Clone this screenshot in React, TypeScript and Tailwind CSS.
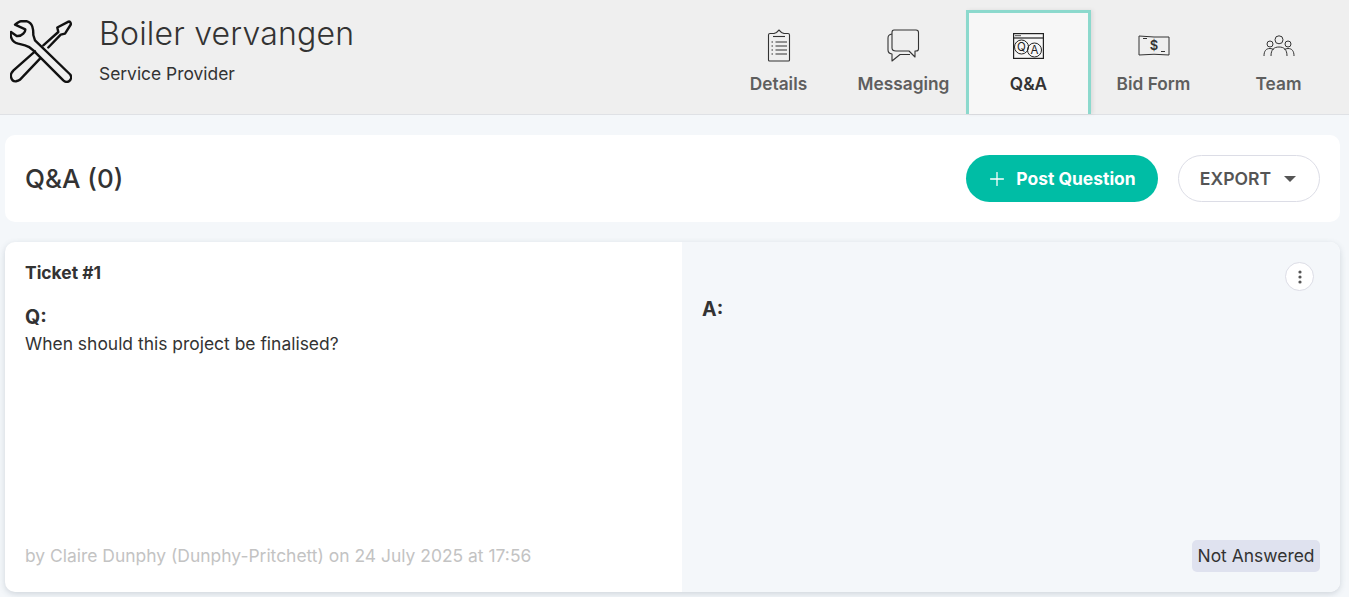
import { Plus } from "lucide-react";

function ToolsIcon() {
  return (
    <svg width="62" height="63" viewBox="0 0 62 63" fill="none" stroke="#111" strokeWidth="2.4" strokeLinejoin="round" strokeLinecap="round">
      {/* wrench */}
      <path d="M5 4.7 C7 3 9 1.2 11 1.2 H16.5 C19.5 2 21.5 4 22.3 6.5 C23.5 10 23.3 13 23.3 15 L25 20.3 L60.2 54.5 C61.5 56.5 61.3 59.5 59.3 61 C57.5 62.3 55 61.8 53.3 60.3 L23.3 30.3 C20.5 27.5 18 26 15 25.3 L8.3 23.7 C5 22.8 2.8 21 1.7 18.7 C0.6 16.5 0.4 14 1 12 L6.7 16 C9 16.3 11.5 15.5 13.3 13.7 C15 12 15.5 11 15.3 9.3 Z" />
      {/* screwdriver */}
      <path d="M33.3 25.3 L48.3 12 L47.3 7.5 L58.5 1.6 C60 1.4 61 2.5 60.8 4.5 L55 13.7 L50.7 14.7 L38.3 27.5" />
      <path d="M25 31.3 L3.5 50.3 C1.3 52.5 0.5 55 1 57 C1.7 60 4 61.5 6 61.3 C7.5 61 8.5 60.8 9.8 59.8 L30 38.7" />
    </svg>
  );
}

function DetailsIcon() {
  return (
    <svg width="24" height="34" viewBox="0 0 24 34" fill="none" stroke="#333" strokeWidth="1.1">
      <path d="M7 4.5 H3 Q1.5 4.5 1.5 6 V31 Q1.5 32 2.5 32 H21.5 Q22.5 32 22.5 31 V6 Q22.5 4.5 21 4.5 H17 L14.5 3.5 L12 1 L9.5 3.5 Z" />
      <path d="M6 7.5 H18" />
      <path d="M8.5 13 H20 M8.5 17 H20 M8.5 21 H20 M8.5 25 H20" />
      <path d="M4.5 13 H6 M4.5 17 H6 M4.5 21 H6 M4.5 25 H6" />
    </svg>
  );
}

function MessagingIcon() {
  return (
    <svg width="34" height="34" viewBox="0 0 34 34" fill="none" stroke="#333" strokeWidth="1.1" strokeLinejoin="round">
      <path d="M7 1 H29 Q31.5 1 31.5 3.5 V20 Q31.5 22 29 22 H28 V28 L22 22 H9 Q5 22 5 19 V3.5 Q5 1 7 1 Z" />
      <path d="M5 5 Q1 5.5 1 9 V21 Q1 24.5 5 25 V32 L13 25.5 H23" />
    </svg>
  );
}

function QaIcon() {
  return (
    <svg width="31" height="26" viewBox="0 0 31 26" fill="none" stroke="#222" strokeWidth="1.2">
      <rect x="0.6" y="0.6" width="29.8" height="24.8" />
      <path d="M0.6 5 H30.4" />
      <path d="M2 2.7 H8" strokeWidth="0.8" />
      <circle cx="8.5" cy="14" r="7" strokeWidth="1" />
      <circle cx="21.5" cy="17" r="7" strokeWidth="1" />
      <text x="8.5" y="18" fontSize="11.5" textAnchor="middle" fill="#222" stroke="none" fontFamily="Inter, sans-serif">Q</text>
      <text x="21.5" y="21" fontSize="11.5" textAnchor="middle" fill="#222" stroke="none" fontFamily="Inter, sans-serif">A</text>
    </svg>
  );
}

function BidIcon() {
  return (
    <svg width="32" height="22" viewBox="0 0 32 22" fill="none" stroke="#333" strokeWidth="1">
      <path d="M1 1 Q16 2.5 31 2 V20 Q16 18.5 1 20 Z" />
      <path d="M5 3.5 H9 M23 16.5 H27" />
      <text x="16" y="15" fontSize="13" fontWeight="600" textAnchor="middle" fill="#333" stroke="none" fontFamily="Inter, sans-serif">$</text>
    </svg>
  );
}

function TeamIcon() {
  return (
    <svg width="32" height="22" viewBox="0 0 32 22" fill="none" stroke="#333" strokeWidth="1">
      <circle cx="16" cy="4.8" r="4" />
      <circle cx="7" cy="9" r="3" />
      <circle cx="25" cy="9" r="3" />
      <path d="M8 21 C8 14.5 11 12 16 12 C21 12 24 14.5 24 21" />
      <path d="M1 21 C1 16 3 13.5 7 13.5 C8.5 13.5 9.5 14 10.5 14.5" />
      <path d="M31 21 C31 16 29 13.5 25 13.5 C23.5 13.5 22.5 14 21.5 14.5" />
    </svg>
  );
}

const tabs = [
  { label: "Details", icon: <DetailsIcon /> },
  { label: "Messaging", icon: <MessagingIcon /> },
  { label: "Q&A", icon: <QaIcon />, active: true },
  { label: "Bid Form", icon: <BidIcon /> },
  { label: "Team", icon: <TeamIcon /> },
];

export default function App() {
  return (
    <div className="h-[597px] overflow-hidden bg-[#f4f7fa] font-['Inter',sans-serif] text-[#333]">
      <header className="flex h-[115px] items-end justify-between border-b border-[#dfe1e5] bg-[#efefef] pr-[8px]">
        <div className="flex h-full items-start pl-[10px] pt-[20px]">
          <ToolsIcon />
          <div className="ml-[27px] -mt-[2px]">
            <h1 className="text-[32px] leading-[32px] font-light tracking-[0.2px]">Boiler vervangen</h1>
            <p className="mt-[14px] text-[17.4px] leading-[20px]">Service Provider</p>
          </div>
        </div>
        <nav className="flex">
          {tabs.map((t) => (
            <div
              key={t.label}
              className={`flex h-[104px] w-[125px] flex-col items-center pb-[18px] ${
                t.active ? "border-[3px] border-b-0 border-[#8cd9cd] bg-[#f7f7f7] text-[#333] shadow-[2px_0_4px_rgba(0,0,0,0.08)]" : "text-[#5e5e5e]"
              }`}
            >
              <div className={`flex h-[66px] w-full items-center justify-center ${t.active ? "pt-[6px]" : "pt-[9px]"}`}>{t.icon}</div>
              <span className="text-[17.3px] leading-[24px] font-semibold">{t.label}</span>
            </div>
          ))}
        </nav>
      </header>

      <main className="pl-[5px] pr-[9px] pt-[20px]">
        <section className="flex h-[87px] items-center justify-between rounded-[10px] bg-white pl-[20px] pr-[20px]">
          <h2 className="text-[26px] leading-[32px] font-medium">Q&amp;A (0)</h2>
          <div className="flex items-center gap-[20px]">
            <button className="flex h-[47px] w-[192px] items-center justify-center gap-[8px] rounded-full bg-[#00bda5] pr-[2px] pt-[1px] text-[17.45px] font-bold text-white">
              <Plus size={22} strokeWidth={1.4} />
              Post Question
            </button>
            <button className="flex h-[47px] w-[142px] items-center justify-center gap-[13px] rounded-full border border-[#dcdde6] pr-[2px] pt-[1px] text-[17.6px] font-semibold text-[#555]">
              EXPORT
              <span className="h-0 w-0 border-x-[6px] border-t-[6px] border-x-transparent border-t-[#555]" />
            </button>
          </div>
        </section>

        <section className="mt-[20px] grid h-[350px] grid-cols-[677px_1fr] overflow-hidden rounded-[10px] bg-white shadow-[0_2px_6px_rgba(60,80,100,0.2)]">
          <div className="flex flex-col justify-between pb-[24px] pl-[20px] pt-[20px]">
            <div>
              <p className="text-[17.45px] leading-[22px] font-bold">Ticket #1</p>
              <p className="mt-[21px] text-[19.6px] leading-[24px] font-bold">Q:</p>
              <p className="mt-[3px] text-[17.45px] leading-[24px]">When should this project be finalised?</p>
            </div>
            <p className="text-[17.45px] leading-[24px] text-[#c3c3c3]">by Claire Dunphy (Dunphy-Pritchett) on 24 July 2025 at 17:56</p>
          </div>
          <div className="flex flex-col justify-between bg-[#f4f7fa] pb-[20px] pl-[20px] pr-[20px] pt-[20px]">
            <div className="flex items-start justify-between">
              <p className="mt-[35px] text-[19.6px] leading-[24px] font-bold">A:</p>
              <button className="mr-[6px] flex h-[29px] w-[29px] items-center justify-center rounded-full border border-[#dcdde6] bg-white">
                <svg width="4" height="14" viewBox="0 0 4 14" fill="#555">
                  <circle cx="2" cy="2" r="1.6" />
                  <circle cx="2" cy="7" r="1.6" />
                  <circle cx="2" cy="12" r="1.6" />
                </svg>
              </button>
            </div>
            <div className="flex justify-end">
              <span className="rounded-[5px] bg-[#dfe2ef] px-[5.5px] py-[4px] text-[17.45px] leading-[24px]">Not Answered</span>
            </div>
          </div>
        </section>
      </main>
    </div>
  );
}
